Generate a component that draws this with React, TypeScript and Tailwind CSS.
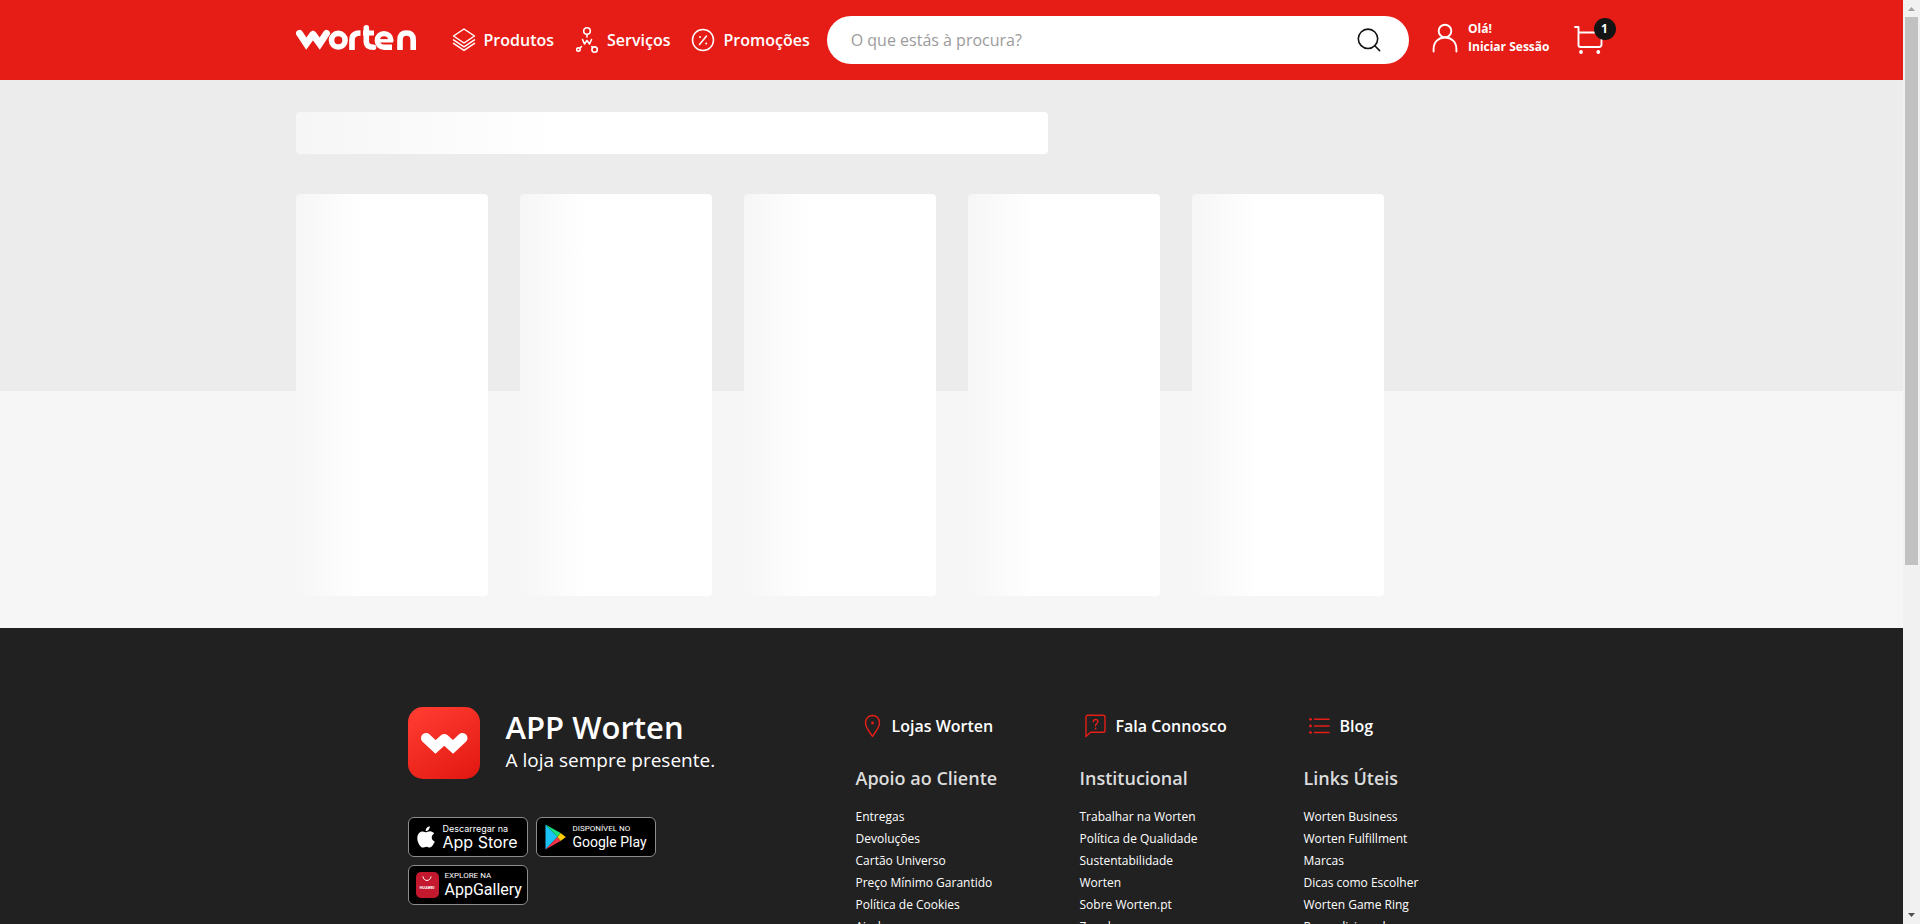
import React from "react";

type LinkColumn = { heading: string; links: string[] };

const columns: LinkColumn[] = [
  {
    heading: "Apoio ao Cliente",
    links: ["Entregas", "Devoluções", "Cartão Universo", "Preço Mínimo Garantido", "Política de Cookies", "Ajuda"],
  },
  {
    heading: "Institucional",
    links: ["Trabalhar na Worten", "Política de Qualidade", "Sustentabilidade", "Worten", "Sobre Worten.pt", "Zonebox"],
  },
  {
    heading: "Links Úteis",
    links: ["Worten Business", "Worten Fulfillment", "Marcas", "Dicas como Escolher", "Worten Game Ring", "Recondicionados"],
  },
];

function WortenLogo() {
  return (
    <svg width="121" height="26" viewBox="0 0 121 26" fill="none" stroke="#fff" strokeWidth="5.6" aria-hidden="true">
      <path d="M3.500 8.400 L10.300 18.600 L17 9.400 M17 9.400 L23.700 18.600 L30.500 8.400" strokeWidth="7" strokeLinecap="round" />
      <circle cx="42.300" cy="15.200" r="6.800" />
      <path d="M56 25 V15 Q56 8 64.500 8" />
      <path d="M70.300 2.900 V16.500 Q70.300 22.200 77.500 22.200" strokeLinecap="round" />
      <path d="M67 8 H78" strokeWidth="5" />
      <path d="M94.900 16.500 V15.200 A6.800 6.800 0 1 0 88.100 22.200 H96" strokeWidth="5.400" />
      <path d="M83 15.800 H97" strokeWidth="3.400" />
      <path d="M104 25 V15 Q104 8 110.500 8 Q117.200 8 117.200 15 V25" />
    </svg>
  );
}

function LayersIcon() {
  return (
    <svg width="24" height="26" viewBox="0 0 24 26" fill="none" stroke="#fff" strokeWidth="1.5" strokeLinejoin="round" strokeLinecap="round" aria-hidden="true">
      <path d="M12 2 L22.500 9 L12 16 L1.500 9 Z" />
      <path d="M1.500 12.800 L12 19.800 L22.500 12.800" />
      <path d="M1.500 16.400 L12 23.400 L22.500 16.400" />
    </svg>
  );
}

function ServicesIcon() {
  return (
    <svg width="24" height="28" viewBox="0 0 24 28" fill="none" stroke="#fff" strokeWidth="1.600" strokeLinecap="round" strokeLinejoin="round" aria-hidden="true">
      <circle cx="12" cy="5" r="3.300" />
      <path d="M12 8.500 V11" />
      <path d="M7.500 13.500 L9.500 18 L12 14.500 L14.500 18 L16.500 13.500" />
      <circle cx="3.400" cy="23.600" r="1.700" />
      <path d="M4.800 22.200 L6.500 20.500" />
      <circle cx="19.600" cy="23.600" r="2.700" />
      <path d="M17.600 21.600 L16.800 20.600" />
    </svg>
  );
}

function PercentIcon() {
  return (
    <svg width="24" height="26" viewBox="0 0 24 26" fill="none" stroke="#fff" strokeWidth="1.500" strokeLinecap="round" aria-hidden="true">
      <circle cx="12" cy="13" r="10.500" />
      <path d="M8.500 17.500 L15.500 9" />
      <circle cx="9" cy="10" r="1" fill="#fff" stroke="none" />
      <circle cx="15.200" cy="16.500" r="1" fill="#fff" stroke="none" />
    </svg>
  );
}

function SearchIcon() {
  return (
    <svg width="26" height="26" viewBox="0 0 26 26" fill="none" stroke="#141414" strokeWidth="1.600" strokeLinecap="round" aria-hidden="true">
      <circle cx="12" cy="11.800" r="9.700" />
      <path d="M18.800 18.800 L23.600 23.600" />
    </svg>
  );
}

function UserIcon() {
  return (
    <svg width="26" height="30" viewBox="0 0 26 30" fill="none" stroke="#fff" strokeWidth="1.900" strokeLinecap="round" aria-hidden="true">
      <circle cx="13" cy="8" r="6.300" />
      <path d="M1.600 28.500 V26 C1.600 19 6.500 14.500 13 14.500 C19.500 14.500 24.400 19 24.400 26 V28.500" />
    </svg>
  );
}

function CartIcon() {
  return (
    <svg width="30" height="30" viewBox="0 0 30 30" fill="none" stroke="#fff" strokeWidth="1.900" strokeLinecap="round" strokeLinejoin="round" aria-hidden="true">
      <path d="M1 2 H4.500 V20 Q4.500 22 6.500 22 H25 Q27.500 22 27.500 19.500 V7.500 H4.500" />
      <circle cx="7" cy="27" r="1.900" fill="#fff" stroke="none" />
      <circle cx="24.300" cy="27" r="1.900" fill="#fff" stroke="none" />
    </svg>
  );
}

function PinIcon() {
  return (
    <svg width="24" height="24" viewBox="0 0 24 24" fill="none" stroke="#e61e17" strokeWidth="1.400" strokeLinejoin="round" aria-hidden="true">
      <path d="M12.500 22.500 C9.500 17.500 5.500 13.500 5.500 9 C5.500 4.500 8.500 1.500 12.500 1.500 C16.500 1.500 19.500 4.500 19.500 9 C19.500 13.500 15.500 17.500 12.500 22.500 Z" />
      <circle cx="12.500" cy="9" r="1.400" fill="#e61e17" stroke="none" />
    </svg>
  );
}

function QuestionIcon() {
  return (
    <svg width="24" height="24" viewBox="0 0 24 24" fill="none" stroke="#e61e17" strokeWidth="1.400" strokeLinecap="round" strokeLinejoin="round" aria-hidden="true">
      <path d="M2 22.500 V3 Q2 1.200 3.800 1.200 H19.200 Q21 1.200 21 3 V16.500 Q21 18.300 19.200 18.300 H6.500 Z" />
      <path d="M9.300 7.600 Q9.500 5.500 11.600 5.500 Q13.900 5.500 13.900 7.600 Q13.900 9 12.400 9.800 Q11.600 10.300 11.600 11.800" />
      <circle cx="11.600" cy="14.500" r="0.900" fill="#e61e17" stroke="none" />
    </svg>
  );
}

function ListIcon() {
  return (
    <svg width="24" height="24" viewBox="0 0 24 24" fill="none" stroke="#e61e17" strokeWidth="1.500" strokeLinecap="round" aria-hidden="true">
      <path d="M6.500 5.300 H21 M6.500 12 H21 M6.500 18.600 H21" />
      <g fill="#e61e17" stroke="none">
        <circle cx="2.500" cy="5.300" r="1.400" />
        <circle cx="2.500" cy="12" r="1.400" />
        <circle cx="2.500" cy="18.600" r="1.400" />
      </g>
    </svg>
  );
}

function AppIcon() {
  return (
    <svg width="72" height="72" viewBox="0 0 72 72" fill="none" aria-hidden="true">
      <defs>
        <linearGradient id="app-red" x1="0.200" y1="0" x2="0.800" y2="1">
          <stop offset="0" stopColor="#ff3b30" />
          <stop offset="1" stopColor="#e31a13" />
        </linearGradient>
      </defs>
      <rect width="72" height="72" rx="15" fill="url(#app-red)" />
      <path d="M18 31 L27.500 40 L36.300 32 M36.300 32 L45 40 L54.500 31" stroke="#fff" strokeWidth="10" strokeLinecap="round" />
    </svg>
  );
}

function AppleMark() {
  return (
    <svg width="18" height="22" viewBox="0 0 18 22" fill="#fff" aria-hidden="true">
      <path d="M12.800 0.300 C13 2.700 11 5.200 8.700 5.100 C8.500 2.800 10.600 0.500 12.800 0.300 Z" />
      <path d="M9.200 6.300 C10 6.300 11.200 5.300 13 5.300 C14.800 5.300 16.300 6.200 17.100 7.600 C13.600 9.700 14.200 14.200 17.700 15.600 C17 17.800 14.900 21.600 12.800 21.600 C11.500 21.600 11 20.800 9.400 20.800 C7.800 20.800 7.200 21.600 6 21.600 C3.300 21.600 0.300 16.400 0.300 12.200 C0.300 8 2.900 5.400 5.600 5.400 C7.200 5.400 8.300 6.300 9.200 6.300 Z" />
    </svg>
  );
}

function PlayMark() {
  return (
    <svg width="21" height="26" viewBox="0 0 21 26" aria-hidden="true">
      <path d="M0.500 0.500 V25.500 L12.500 13 Z" fill="#19c3f5" />
      <path d="M0.500 0.500 L12.500 13 L15.600 9 Z" fill="#17e07c" />
      <path d="M0.500 25.500 L12.500 13 L15.600 17 Z" fill="#f4324a" />
      <path d="M15.600 9 L20.800 13 L15.600 17 L12.500 13 Z" fill="#fdca06" />
    </svg>
  );
}

function HuaweiMark() {
  return (
    <span className="flex h-[26px] w-[23px] flex-col items-center gap-1 rounded-[5px] bg-[#c4182f] pt-1">
      <svg width="10" height="6" viewBox="0 0 10 6" fill="none" stroke="#fff" strokeWidth="1" strokeLinecap="round" aria-hidden="true">
        <path d="M1 0.800 C1.500 5.800 8.500 5.800 9 0.800" />
      </svg>
      <span className="text-[4px] leading-[4px] font-bold">HUAWEI</span>
    </span>
  );
}

type StoreBadgeProps = { mark: React.ReactNode; small: string; name: string; nameClass: string; smallClass: string; badgeClass: string };

function StoreBadge({ mark, small, name, nameClass, smallClass, badgeClass }: StoreBadgeProps) {
  return (
    <a href="#" className={`flex h-10 w-[120px] items-center rounded-md border border-[#8c8c8c] bg-black whitespace-nowrap text-white ${badgeClass}`}>
      {mark}
      <span className="flex flex-col">
        <span className={smallClass}>{small}</span>
        <span className={nameClass}>{name}</span>
      </span>
    </a>
  );
}

function Header() {
  const nav = [
    { label: "Produtos", icon: <LayersIcon /> },
    { label: "Serviços", icon: <ServicesIcon /> },
    { label: "Promoções", icon: <PercentIcon /> },
  ];
  return (
    <header className="bg-[#e61d16] text-white">
      <div className="mx-auto flex h-20 max-w-[1312px] items-center">
        <a href="#" aria-label="Worten" className="mr-[35px] shrink-0 pb-1">
          <WortenLogo />
        </a>
        <nav className="flex shrink-0 items-center gap-[21px] text-base font-semibold">
          {nav.map((item) => (
            <a key={item.label} href="#" className="flex items-center gap-2">
              {item.icon}
              {item.label}
            </a>
          ))}
        </nav>
        <form role="search" className="ml-[17px] flex h-12 min-w-0 flex-1 items-center rounded-full bg-white pr-[27px] pl-6">
          <input
            type="text"
            aria-label="Pesquisar"
            placeholder="O que estás à procura?"
            className="min-w-0 flex-1 bg-transparent text-base text-[#141414] outline-none placeholder:text-[#9b9b9b]"
          />
          <button type="button" aria-label="Procurar">
            <SearchIcon />
          </button>
        </form>
        <a href="#" className="ml-[23px] flex shrink-0 items-center gap-[10px] pb-1 text-xs leading-[18px] font-bold">
          <UserIcon />
          <span>
            Olá!
            <br />
            Iniciar Sessão
          </span>
        </a>
        <button type="button" aria-label="Carrinho" className="relative mr-1 ml-6 shrink-0">
          <CartIcon />
          <span className="absolute -top-[7px] left-5 flex size-[22px] items-center justify-center rounded-full bg-[#141414] text-xs font-bold">1</span>
        </button>
      </div>
    </header>
  );
}

function Skeletons() {
  const shimmer = "rounded bg-linear-to-r from-[#f6f6f6] to-white to-35%";
  return (
    <main className="bg-linear-to-b from-[#ececec] from-[311px] to-[#f6f6f6] to-[311px] py-8">
      <div className="mx-auto max-w-[1312px]">
        <div className={`h-[42px] max-w-[752px] ${shimmer}`} />
        <div className="mt-10 grid grid-cols-6 gap-8">
          {[0, 1, 2, 3, 4].map((card) => (
            <div key={card} className={`h-[402px] ${shimmer}`} />
          ))}
        </div>
      </div>
    </main>
  );
}

function Footer() {
  const shortcuts = [
    { label: "Lojas Worten", icon: <PinIcon /> },
    { label: "Fala Connosco", icon: <QuestionIcon /> },
    { label: "Blog", icon: <ListIcon /> },
  ];
  return (
    <footer className="flex-1 bg-[#212121] text-white">
      <div className="mx-auto grid max-w-[1312px] grid-cols-12 gap-x-8 pt-[79px]">
        <section className="col-span-4 col-start-2">
          <div className="flex items-center gap-[26px]">
            <AppIcon />
            <div className="pb-[2px]">
              <h2 className="text-[31px] leading-9 font-semibold">APP Worten</h2>
              <p className="text-[19px] leading-[30px]">A loja sempre presente.</p>
            </div>
          </div>
          <div className="mt-[38px] flex max-w-64 flex-wrap gap-2">
            <StoreBadge
              mark={<AppleMark />}
              small="Descarregar na"
              name="App Store"
              badgeClass="gap-2 pl-2 font-[Inter,sans-serif]"
              smallClass="text-[9px] leading-[10px]"
              nameClass="text-base leading-[17px]"
            />
            <StoreBadge
              mark={<PlayMark />}
              small="DISPONÍVEL NO"
              name="Google Play"
              badgeClass="gap-[7px] pl-2 font-[Roboto,sans-serif]"
              smallClass="text-[8px] leading-[10px]"
              nameClass="text-sm leading-[17px]"
            />
            <StoreBadge
              mark={<HuaweiMark />}
              small="EXPLORE NA"
              name="AppGallery"
              badgeClass="gap-[6px] pl-[7px] font-[Roboto,sans-serif]"
              smallClass="text-[8px] leading-[10px]"
              nameClass="text-base leading-[18px]"
            />
          </div>
        </section>
        <div className="col-span-6 col-start-6 grid grid-cols-3 gap-x-8 pt-[7px]">
          {columns.map((column, index) => (
            <section key={column.heading} className="whitespace-nowrap">
              <a href="#" className="flex items-center gap-2 pl-1 text-base leading-6 font-semibold">
                {shortcuts[index].icon}
                {shortcuts[index].label}
              </a>
              <h3 className="mt-[26px] text-lg leading-7 font-semibold text-[#dcdcdc]">{column.heading}</h3>
              <ul className="mt-[14px] text-xs leading-[22px]">
                {column.links.map((link) => (
                  <li key={link}>
                    <a href="#">{link}</a>
                  </li>
                ))}
              </ul>
            </section>
          ))}
        </div>
      </div>
    </footer>
  );
}

function ScrollRail() {
  return (
    <div aria-hidden="true" className="flex w-[17px] shrink-0 flex-col items-center bg-[#f1f1f1]">
      <svg width="17" height="17" viewBox="0 0 17 17" fill="#a3a3a3">
        <path d="M5 11 L8.500 7 L12 11 Z" />
      </svg>
      <div className="w-[13px] basis-[548px] bg-[#c1c1c1]" />
      <svg className="mt-auto" width="17" height="17" viewBox="0 0 17 17" fill="#505050">
        <path d="M5 6 L8.500 10 L12 6 Z" />
      </svg>
    </div>
  );
}

export default function App() {
  return (
    <div className="flex h-screen overflow-hidden font-['Open_Sans','Noto_Sans',sans-serif]">
      <div className="flex min-w-0 flex-1 flex-col overflow-hidden">
        <Header />
        <Skeletons />
        <Footer />
      </div>
      <ScrollRail />
    </div>
  );
}
